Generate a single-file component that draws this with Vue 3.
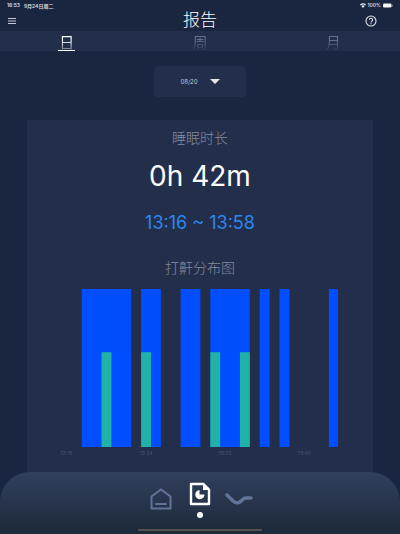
<script setup>
import { ref } from 'vue'

const tabs = [
  { id: 'day', label: '日' },
  { id: 'week', label: '周' },
  { id: 'month', label: '月' },
]
const active = ref('day')
const date = ref('08/20')

// One slot is one 1/28 of the recorded time
const sleep = [
  { start: 2, span: 5 },
  { start: 8, span: 2 },
  { start: 12, span: 2 },
  { start: 15, span: 4 },
  { start: 20, span: 1 },
  { start: 22, span: 1 },
  { start: 27, span: 1 },
]
const snore = [4, 8, 15, 18]
const slots = 28
const times = ['13:16', '13:24', '13:32', '13:40']
const pct = (n) => (n / slots) * 100 + '%'
</script>

<template>
  <div class="page">
    <div class="status">
      <span class="clock">16:53</span>
      <span>9月24日周二</span>
      <span class="battery">
        <svg width="6" height="5" viewBox="0 0 12 10" aria-hidden="true">
          <path d="M0 3.2Q6-2 12 3.2L10.4 5Q6 1.4 1.6 5ZM2.6 6Q6 3.2 9.4 6L6 9.8Z" fill="#e8eaf0" />
        </svg>
        <span>100%</span>
        <svg width="10" height="5" viewBox="0 0 20 10" aria-hidden="true">
          <rect x="0" y="1" width="17" height="8" rx="2.5" fill="#f5f6f8" />
          <rect x="18" y="3.5" width="1.5" height="3" rx=".7" fill="#aab0bd" />
        </svg>
      </span>
    </div>

    <header class="head">
      <button class="icon" aria-label="菜单">
        <svg width="8" height="6" viewBox="0 0 8 6"><path d="M0 .5H8M0 3H8M0 5.5H8" stroke="#c5c9d3" stroke-width="1" /></svg>
      </button>
      <h1>报告</h1>
      <button class="icon help" aria-label="帮助">
        <svg width="12" height="12" viewBox="0 0 24 24" fill="none" stroke="#dfe2e8" stroke-width="2.2">
          <circle cx="12" cy="12" r="10" />
          <path d="M8.8 9.6a3.2 3.2 0 1 1 5 2.7c-1.3.9-1.8 1.3-1.8 2.5" />
          <path d="M12 16.4v2" />
        </svg>
      </button>
    </header>

    <nav class="tabs">
      <button v-for="t in tabs" :key="t.id" :class="{ on: t.id === active }" @click="active = t.id">
        <span>{{ t.label }}</span>
      </button>
    </nav>

    <button class="date">
      <span>{{ date }}</span>
      <svg width="10" height="5" viewBox="0 0 10 5" aria-hidden="true"><path d="M0 0H10Q9 1 8 2L5.6 4.5Q5 5 4.4 4.5L2 2Q1 1 0 0Z" fill="#e4e4e4" /></svg>
    </button>

    <main class="card">
      <h2>睡眠时长</h2>
      <p class="total">0h 42m</p>
      <p class="range">13:16 ~ 13:58</p>
      <h2>打鼾分布图</h2>
      <div class="chart">
        <svg class="plot" width="100%" height="158" aria-hidden="true">
          <rect v-for="b in sleep" :key="'a' + b.start" :x="pct(b.start)" y="0" :width="pct(b.span)" height="100%" fill="#004eff" />
          <rect v-for="s in snore" :key="'b' + s" :x="pct(s)" y="40%" :width="pct(1)" height="60%" fill="#20b2a6" />
        </svg>
        <div class="axis"><span v-for="t in times" :key="t">{{ t }}</span></div>
      </div>
    </main>

    <footer class="dock">
      <div class="items">
        <a href="#home" aria-label="首页">
          <svg width="22" height="22" viewBox="0 0 22 22" fill="none" stroke="#627399" stroke-width="2">
            <path d="M1.5 8.5L11 1.5L20.5 8.5V20.5H1.5Z" />
            <path d="M6 16H16" stroke-linecap="round" />
          </svg>
        </a>
        <a href="#report" class="current" aria-label="报告">
          <svg width="22" height="24" viewBox="0 0 22 24">
            <path d="M2 2H14.5L20 7.5V22H2Z" fill="none" stroke="#fff" stroke-width="2.4" stroke-linejoin="round" />
            <path d="M14 1.5V8H20.5Z" fill="#fff" />
            <path d="M10.5 8A4.6 4.6 0 1 0 15.5 12.5H10.5Z" fill="#fff" />
          </svg>
          <i></i>
        </a>
        <a href="#device" aria-label="设备">
          <svg width="28" height="12" viewBox="0 0 28 12" fill="none" stroke="#627399" stroke-width="3.6" stroke-linecap="round" stroke-linejoin="round">
            <path d="M2 2L8 8Q10 9.8 12 9.8H13Q14.5 9.8 16 8L18.500 5.800Q19.500 5 21 5H26" />
          </svg>
        </a>
      </div>
      <div class="grip"></div>
    </footer>
  </div>
</template>

<style>
body {
  margin: 0;
  background: #1a2540;
}
</style>

<style scoped>
.page {
  min-height: 100vh;
  display: flex;
  flex-direction: column;
  background: #1a2540;
  color: #fff;
  font-family: Inter, 'Noto Sans CJK SC', sans-serif;
}
button {
  border: 0;
  padding: 0;
  background: none;
  color: inherit;
  font: inherit;
}
h1, h2, p {
  margin: 0;
  font-weight: 400;
}
svg {
  display: block;
}
.status {
  display: flex;
  align-items: center;
  gap: 4px;
  height: 10px;
  padding: 0 7px;
  font-size: 5px;
  font-weight: 500;
  color: #e8eaf0;
}
.battery {
  display: flex;
  align-items: center;
  gap: 2px;
  margin-left: auto;
}
.head {
  display: grid;
  grid-template-columns: 48px 1fr 48px;
  align-items: center;
  height: 21px;
  padding: 0 8px;
}
h1 {
  font-size: 17px;
  font-weight: 300;
  line-height: 21px;
  text-align: center;
}
.help {
  justify-self: end;
  padding-right: 15px;
}
.tabs {
  display: grid;
  grid-template-columns: repeat(3, 1fr);
  height: 20px;
  background: #232e4b;
}
.tabs button {
  display: flex;
  justify-content: center;
}
.tabs span {
  width: 17px;
  height: 19px;
  border-bottom: 1px solid transparent;
  font-size: 15px;
  line-height: 24px;
  text-align: center;
  overflow: hidden;
  background: linear-gradient(#66708a, #66708a 45%, #2f3a56) padding-box text;
  color: transparent;
}
.tabs .on span {
  background-image: linear-gradient(#fff, #fff 45%, #6a738a);
  border-color: #fff;
}
.date {
  display: flex;
  align-items: center;
  justify-content: center;
  gap: 12px;
  align-self: center;
  width: 23%;
  height: 31px;
  margin-top: 15px;
  border-radius: 3px;
  background: #232e4b;
  font-size: 6px;
  color: #c9cdd6;
}
.card {
  display: flex;
  flex-direction: column;
  align-items: center;
  margin: 23px 27px 0;
  padding-top: 8px;
  background: #232e4b;
}
h2 {
  font-size: 14px;
  font-weight: 300;
  line-height: 20px;
  color: #858a9c;
}
.total {
  margin-top: 8px;
  font-size: 28px;
  line-height: 40px;
}
.range {
  margin: 15px 0 23px;
  font-size: 18px;
  line-height: 24px;
  color: #2d86ee;
}
.chart {
  align-self: stretch;
  margin-top: 11px;
  padding: 0 10%;
}
.axis {
  display: grid;
  grid-template-columns: repeat(3, 8fr) 4fr;
  height: 24px;
  padding-top: 1px;
  font-size: 5px;
  line-height: 10px;
  color: #4b556c;
}
.axis span {
  margin-left: -1px;
}
.dock {
  display: flex;
  flex-direction: column;
  flex: 1;
  border-radius: 30px 30px 0 0;
  background: linear-gradient(#323f5e, #1c2938);
}
.items {
  display: grid;
  grid-template-columns: repeat(3, 39px);
  justify-content: center;
  align-items: start;
  padding-top: 10px;
}
.items a {
  display: flex;
  flex-direction: column;
  align-items: center;
  justify-content: center;
  gap: 6px;
  height: 34px;
}
.items .current {
  height: 36px;
}
.current i {
  width: 6px;
  height: 6px;
  border-radius: 50%;
  background: #fff;
}
.grip {
  align-self: center;
  width: 31%;
  height: 2px;
  margin-top: auto;
  margin-bottom: 3px;
  border-radius: 1px;
  background: #54524f;
}
</style>
